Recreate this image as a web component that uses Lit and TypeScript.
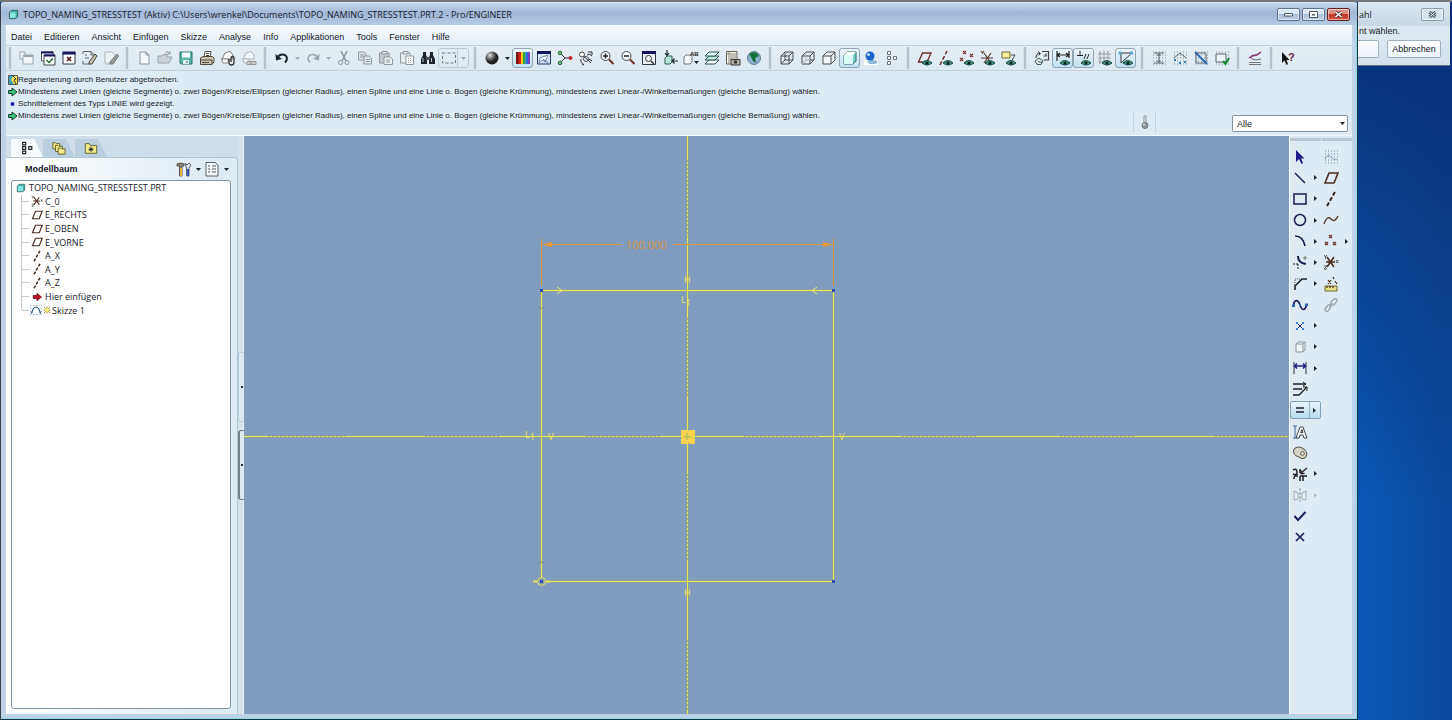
import { LitElement, html, css, svg } from "lit";
import type { SVGTemplateResult, TemplateResult } from "lit";
import { customElement, property } from "lit/decorators.js";
import { classMap } from "lit/directives/class-map.js";

const eye = svg`<path d="M5 13 Q9.500 8 15 13 Q10 17 5 13Z" fill="#3f8f78" stroke="#17493f" stroke-width="1"/><circle cx="10" cy="13" r="1.500" fill="#06231f"/>`;
const dots = svg`<path d="M2 2H15M2 5H15M2 8H15M2 11H15M2 14H15" stroke="#7d8a90" stroke-dasharray="1 2" fill="none"/>`;
const page = (c: string) => svg`<path d="M4 2H10L13 5V14H4Z" fill="#f4f8fb" stroke="${c}"/><path d="M10 2V5H13" fill="none" stroke="${c}"/>`;

const ICONS: Record<string, SVGTemplateResult> = {
  windows: svg`<path d="M1 2H6V5H14V14H4V9H1Z" fill="#f3f7fa" stroke="#9aa5ab"/><path d="M4 9V5H6" fill="none" stroke="#9aa5ab"/><path d="M5 6H14" stroke="#9aa5ab" stroke-width="2"/>`,
  activate: svg`<path d="M1.500 2H13V11H1.500Z" fill="#fff" stroke="#555"/><path d="M1 2.500H13.500" stroke="#15155c" stroke-width="2"/><path d="M4 5H15V15H4Z" fill="#fff" stroke="#444"/><path d="M4 5.500H15" stroke="#15155c" stroke-width="2"/><path d="M6.500 10L9 12.500L13 8.500" fill="none" stroke="#206a30" stroke-width="1.500"/>`,
  closewin: svg`<path d="M2 2.500H14V14H2Z" fill="#fff" stroke="#334"/><path d="M1.500 3H14.500" stroke="#15155c" stroke-width="3"/><path d="M6 7L10 11M10 7L6 11" stroke="#511" stroke-width="1.500"/>`,
  erase: svg`<path d="M1 4V1.500H9L12 4.500V7M1 11V14H8M3 5H5M3 8H7M9 1.500V5H12" fill="none" stroke="#666" /><path d="M7 12L13 4L15 6L10 14H7Z" fill="#c7c0aa" stroke="#444"/>`,
  eraseoff: svg`<path d="M2 13V2H9L12 5V7M2 14H8" fill="#eef3f6" stroke="#aab3b8"/><path d="M7 12L14 4L15.500 6L10 14H7Z" fill="#999" stroke="#777"/>`,
  newfile: page("#8c959a"),
  open: svg`<path d="M1 13V6H5L6 4.500H10V7H15L12 13Z" fill="#cdd3d6" stroke="#9aa3a8"/><path d="M8 3Q11 0 13 4M13 1V4H10" fill="none" stroke="#8f999f"/>`,
  save: svg`<path d="M2 2H14V14H3L2 13Z" fill="#58b8a8" stroke="#2b7068"/><path d="M4 2.500H12V7.500H4Z" fill="#f8ffff"/><path d="M5 10H11V14H5Z" fill="#dcefee"/><path d="M9 11V13" stroke="#2b7068"/>`,
  print: svg`<path d="M5 7L6 1.500H12L11 7" fill="#fff" stroke="#555"/><path d="M1.500 8L4 6.500H13.500L15 8V12L13 14.500H1.500Z" fill="#c9c3b0" stroke="#4e4839"/><path d="M1.500 10H13V14M3 12.500H10M7 3.500H10M7 5.500H10" stroke="#4e4839" fill="none"/>`,
  mailfile: svg`<path d="M2 9L5 3L10 1.500L13 5V9H2Z" fill="#fff" stroke="#777"/><path d="M1.500 9H8V13H3Z" fill="#fff" stroke="#888"/><path d="M9 9V12.500Q9 15 11.500 15T14 12.500V8Q14 6.500 12.500 6.500T11 8V12" fill="none" stroke="#333" stroke-width="1.300"/>`,
  maillink: svg`<path d="M2 9L5 3L10 1.500L13 5V9H2Z" fill="#f5f8fa" stroke="#aab2b6"/><path d="M1.500 9H8V13H3Z" fill="#f5f8fa" stroke="#aab2b6"/><path d="M6 11.500H10V14.500H6ZM10 11.500H15V14.500H10Z" fill="#ccc" stroke="#999"/>`,
  undo: svg`<path d="M3 8Q6 3 11 5Q15 8 11 12.500" fill="none" stroke="#1c2430" stroke-width="2"/><path d="M1.500 4L2 10.500L8 9Z" fill="#1c2430"/>`,
  redo: svg`<path d="M13 8Q10 3 5 5Q1 8 5 12.500" fill="none" stroke="#9aa5ab" stroke-width="1.500"/><path d="M14.500 4L14 10.500L8 9Z" fill="#9aa5ab"/>`,
  cut: svg`<path d="M5 1L10 11M11 1L6 11" stroke="#8b959b" stroke-width="1.500"/><circle cx="4.500" cy="12.500" r="2" fill="none" stroke="#8b959b"/><circle cx="11" cy="12.500" r="2" fill="none" stroke="#8b959b"/>`,
  copy: svg`<path d="M1.500 2H7L9 4V10H1.500Z" fill="#dfe5e9" stroke="#8f999f"/><path d="M7 6H12L14.500 8V14H7Z" fill="#dfe5e9" stroke="#8f999f"/><path d="M3 5H7M3 7H7M9 9.500H13M9 11.500H13" stroke="#8f999f"/>`,
  paste: svg`<path d="M1.500 3H11V13H1.500Z" fill="#c4cacd" stroke="#8f999f"/><path d="M4 1.500H9V4H4Z" fill="#eee" stroke="#8f999f"/><path d="M6 7H12L14.500 9V14.500H6Z" fill="#eef2f4" stroke="#8f999f"/><path d="M8 10H12M8 12H12" stroke="#8f999f"/>`,
  pastespecial: svg`<path d="M1.500 3H11V13H1.500Z" fill="#e6ebee" stroke="#8f999f"/><path d="M4 1.500H9V4H4Z" fill="#eee" stroke="#8f999f"/><path d="M7 6H14.500V14.500H7Z" fill="#fff" stroke="#8f999f"/><path d="M9 8.500H13M9 10.500H13M9 12.500H13" stroke="#8f999f" stroke-dasharray="1 1"/>`,
  find: svg`<path d="M3 2H6V5L7 7V14H1V9L3 5ZM10 2H13V5L15 9V14H9V7L10 5Z" fill="#20262c"/><path d="M6 7H10V10H6Z" fill="#4a525a"/><path d="M3 8V12M11.500 8V12" stroke="#b9c2c8"/>`,
  box: svg`<path d="M1.500 3H14.500V13H1.500Z" fill="none" stroke="#6f7f8a" stroke-dasharray="3 2"/>`,
  spectrum: svg`<path d="M1 2H4V14H1Z" fill="#761912"/><path d="M3.500 2H6V14H3.500Z" fill="#d8241b"/><path d="M6 2H8V14H6Z" fill="#f6c619"/><path d="M8 2H10.500V14H8Z" fill="#2ca83a"/><path d="M10.500 2H13V14H10.500Z" fill="#2a66e0"/><path d="M13 2H15V14H13Z" fill="#7a3fc0"/>`,
  repaint: svg`<path d="M1.500 2H14.500V14H1.500Z" fill="#d5e4f3" stroke="#223a66"/><path d="M1 2.500H15" stroke="#15155c" stroke-width="3"/><path d="M3 13L4 8L12 5L9 12L6 10Z" fill="#fff" stroke="#6d8cb3"/><path d="M7 9L12 13" stroke="#3b5f92"/>`,
  orient: svg`<path d="M3.500 3.500L8 8L3.500 12.500M8 8H13" fill="none" stroke="#333"/><circle cx="3" cy="3" r="1.800" fill="#6dc080" stroke="#256b38"/><circle cx="3" cy="13" r="1.800" fill="#6dc080" stroke="#256b38"/><circle cx="13.500" cy="8" r="2" fill="#c22b31"/>`,
  spin: svg`<circle cx="4" cy="4.500" r="2.500" fill="#fff" stroke="#444"/><circle cx="8" cy="9" r="2.500" fill="#e8eef2" stroke="#555"/><path d="M6 6.500L13 13M10 2H14V5M9 5Q12 3 14 6M3 9Q2 13 6 14.500L4 15M11 9L14 11" fill="none" stroke="#333"/>`,
  zoomin: svg`<circle cx="6.500" cy="6" r="4.500" fill="#f6fafc" stroke="#444"/><path d="M4 6H9M6.500 3.500V8.500" stroke="#222" stroke-width="1.500"/><path d="M10 9.500L14.500 14" stroke="#6a3320" stroke-width="2"/>`,
  zoomout: svg`<circle cx="6.500" cy="6" r="4.500" fill="#f6fafc" stroke="#444"/><path d="M4 6H9" stroke="#222" stroke-width="1.500"/><path d="M10 9.500L14.500 14" stroke="#6a3320" stroke-width="2"/>`,
  refit: svg`<path d="M1.500 2H14.500V14.500H1.500Z" fill="#eaf2f8" stroke="#334"/><path d="M1 2.500H15" stroke="#15155c" stroke-width="3"/><circle cx="7.500" cy="8.500" r="3" fill="#fff" stroke="#333"/><path d="M10 11L13 14" stroke="#333" stroke-width="1.500"/>`,
  reorient: svg`<path d="M3 8L5 6H10V12L8 14H3Z" fill="#b8e7da" stroke="#2d5b50"/><path d="M5 0V5M3 3L5 5.500L7 3M16 11H10M12.500 8.500L10 11L12.500 13.500" fill="none" stroke="#1d2d2a" stroke-width="1.200"/>`,
  views: svg`<path d="M1 7L3 5H9V12L7 14H1Z" fill="#f3f8fa" stroke="#777"/><text x="7" y="6" font-size="6" font-weight="700" font-family="Liberation Sans" fill="#222">AB</text><path d="M11 11H16L13.500 14Z" fill="#222"/>`,
  layers: svg`<path d="M1 14L5 10H15L11 14Z" fill="#fff" stroke="#28564e"/><path d="M1 10L5 6H15L11 10Z" fill="#bfe9dd" stroke="#28564e"/><path d="M1 6L5 2H15L11 6Z" fill="#e8fffa" stroke="#28564e"/>`,
  capture: svg`<path d="M1.500 1.500H12V14H1.500Z" fill="#f7f7f2" stroke="#665f55"/><path d="M1.500 4H12M4 1.500V14M5 6H11M5 8H11M5 10H8" stroke="#8c857a"/><path d="M6 9.500H15V15H6Z" fill="#b6b3aa" stroke="#3a372f"/><circle cx="10.500" cy="12" r="1.800" fill="#333"/>`,
  globe: svg`<circle cx="8" cy="8" r="6.500" fill="#8fb2cc" stroke="#5d7f98"/><path d="M3 4Q7 1 11 3L13 6L9 8L10 13L7 11L5 7Z" fill="#157038"/>`,
  wire: svg`<path d="M2 6H10V14H2ZM6 2H14V10H6ZM2 6L6 2M10 6L14 2M10 14L14 10M2 14L6 10" fill="none" stroke="#4a4a4a"/>`,
  hidden: svg`<path d="M2 6H10V14H2ZM6 2H14V10H10M2 6L6 2M10 6L14 2M10 14L14 10" fill="none" stroke="#4a4a4a"/><path d="M6 2V10H10M2 14L6 10" fill="none" stroke="#b0b6ba"/>`,
  nohidden: svg`<path d="M2 6H10V14H2ZM2 6L6 2H14V10L10 14M10 6L14 2" fill="#f0f5f8" stroke="#4a4a4a"/>`,
  shaded: svg`<path d="M2 5L5 2H14V11L11 14H2Z" fill="#78d3c8" stroke="#2f6b66"/><path d="M2 5H11V14H2Z" fill="#d9fbf6"/><path d="M2 5L5 2H14L11 5Z" fill="#fff"/>`,
  enhanced: svg`<path d="M1 10H15V15H1Z" fill="#fff"/><ellipse cx="9.500" cy="12" rx="5" ry="2" fill="#8fb8d8"/><circle cx="7" cy="6" r="4.500" fill="#1763c7"/><circle cx="5.500" cy="4.500" r="1.500" fill="#b7ddff"/>`,
  tree: svg`<path d="M3.500 1.500H6.500V4.500H3.500ZM3.500 6.500H6.500V9.500H3.500ZM3.500 11.500H6.500V14.500H3.500ZM9.500 6.500H12.500V9.500H9.500Z" fill="#f8fafb" stroke="#6a7379"/>`,
  treetab: svg`<path d="M3 1.500H6.500V4.500H3ZM3 6.500H6.500V9.500H3ZM3 11.500H6.500V14.500H3ZM10 6.500H13.500V9.500H10Z" fill="#fff" stroke="#222" stroke-width="1.300"/>`,
  planeeye: svg`<path d="M1.500 12L5.500 3H14L10 12Z" fill="none" stroke="#6b2d25" stroke-width="1.300"/>${eye}`,
  axiseye: svg`<path d="M2 15L9 1" fill="none" stroke="#6b2d25" stroke-width="1.500" stroke-dasharray="4 2"/>${eye}`,
  pointeye: svg`<path d="M4 1L7 4M7 1L4 4M1 8L4 11M4 8L1 11M11 4L14 7M14 4L11 7" stroke="#7b2d25" stroke-width="1.200"/>${eye}`,
  csyseye: svg`<path d="M1 8H13M4 3L11 13M11 3L4 13M1 1L2.500 3L4 1" fill="none" stroke="#5d3b2e" stroke-width="1.200"/>${eye}`,
  noteeye: svg`<path d="M1 2H9V8H1Z" fill="#f5ef9a" stroke="#6e6a32"/><path d="M10 5H14L10 12" fill="none" stroke="#444"/>${eye}`,
  sketchview: svg`<path d="M8 1.500H14.500V10H9.500M9.500 6H12V3.500" fill="none" stroke="#444" stroke-width="1.200"/><path d="M2 8Q2 3 6 3.500M4 1.500L6.500 3.500L4.500 5.500" fill="none" stroke="#333"/><path d="M1 11L5 8L9 11L7 14.500H3Z" fill="#e3ebe9" stroke="#3f5c55"/><path d="M4 11.500L8 12.500" stroke="#3f5c55"/>`,
  dimeye: svg`<path d="M2 1V11M14 1V8M2 5H14M5 3L2 5L5 7M11 3L14 5L11 7" fill="none" stroke="#252525" stroke-width="1.200"/>${eye}`,
  conseye: svg`<path d="M4 1V5M1 5.500H7M8 9L10 4M11 9L13 4" stroke="#252525"/>${eye}`,
  grideye: svg`<path d="M1 4H14M1 8H14M1 12H8M3 1V14M7 1V14M11 1V9" stroke="#9a9aa0"/>${eye}`,
  verteye: svg`<path d="M2 3H14L3 13V3" fill="none" stroke="#363636"/><path d="M0.500 1.500H3.500V4.500H.5ZM12 1.500H15V4.500H12Z" fill="#5aa8d8"/>${eye}`,
  diag1: svg`${dots}<path d="M3 3H13M3 13H13M8 3V13M6 5H10M6 11H10" stroke="#596267" fill="none"/>`,
  diag2: svg`${dots}<path d="M2 8L8 3L14 8" stroke="#596267" fill="none"/><path d="M2 9H4V11H2ZM12 11H14V13H12ZM7 12H9V14H7Z" fill="#2f7fc6"/>`,
  diag3: svg`${dots}<path d="M3 3H13V13H3Z" stroke="#596267" fill="none"/><path d="M2 2L14 14" stroke="#2868b0" stroke-width="1.800"/>`,
  diag4: svg`${dots}<path d="M2 4H12V12H2Z" stroke="#596267" fill="#eef5f8"/><path d="M9 11L11.500 14L15 8" fill="none" stroke="#198a3a" stroke-width="2"/>`,
  curve: svg`<path d="M2 14.500H14M2 12.500H14" fill="none" stroke="#777"/><path d="M14 2L9 5Q3 5 3 7T9 10L14 9" fill="none" stroke="#666"/><path d="M2 8Q6 5 10 5L14 2" fill="none" stroke="#8c3b78" stroke-width="1.500"/>`,
  help: svg`<path d="M2 2V13L4.500 10.500L6.500 15L8 14L6.500 10H9.500Z" fill="#111"/><text x="8" y="11" font-size="11" font-weight="700" font-family="Liberation Sans" fill="#641a4a">?</text>`,
  arrow: svg`<path d="M4 1V13L7 10L9.500 15L11 14L9 9.500H12.500Z" fill="#1b1b86"/>`,
  line: svg`<path d="M3 3L13 13" stroke="#1b1b4e" stroke-width="1.500"/>`,
  rect: svg`<path d="M2 3H14V13H2Z" fill="none" stroke="#1b1b4e" stroke-width="1.500"/>`,
  circle: svg`<circle cx="8" cy="8" r="5.500" fill="none" stroke="#1b1b4e" stroke-width="1.500"/>`,
  arc: svg`<path d="M3 3Q11 3 13 13" fill="none" stroke="#1b1b4e" stroke-width="1.700"/>`,
  fillet: svg`<path d="M6 2Q6 9 14 10" fill="none" stroke="#1b1b4e" stroke-width="2"/><path d="M1 10H7M6 10V15" stroke="#222" stroke-dasharray="2 1"/><path d="M11 4H15M13 2V6" stroke="#777"/>`,
  chamfer: svg`<path d="M3 14V10L10 3H15" fill="none" stroke="#222" stroke-width="1.600"/><path d="M3 9V3H9" fill="none" stroke="#555" stroke-dasharray="1 1"/>`,
  spline: svg`<path d="M1.500 9C2 2 6 2 8 8S13 14 14.500 8" fill="none" stroke="#1b1b5e" stroke-width="1.700"/><path d="M0 7.500H3V10H0ZM7 7H9V9H7ZM13 6.500H16V9H13Z" fill="#2d68a8"/>`,
  point: svg`<path d="M5.500 5.500L10.500 10.500M10.500 5.500L5.500 10.500" stroke="#26267a"/><path d="M4 4H6V6H4ZM10 4H12V6H10ZM4 10H6V12H4ZM10 10H12V12H10Z" fill="#3d82c6"/>`,
  useedge: svg`<path d="M4 5H11V13H4ZM4 5L6 3H13V11L11 13M11 5L13 3" fill="#f1f6f9" stroke="#8d979d"/>`,
  dim: svg`<path d="M2 2V14M14 2V14" stroke="#333"/><path d="M2 6H14M5 3.500L2.500 6L5 8.500M11 3.500L13.500 6L11 8.500" fill="none" stroke="#1b1b86" stroke-width="1.500"/>`,
  modify: svg`<path d="M1 3H14M1 8H10M1 14H7L13 8L15 6" fill="none" stroke="#222" stroke-width="1.400"/><path d="M11 1L14 3L11 5M11 6H15V10" fill="none" stroke="#222"/>`,
  equal: svg`<path d="M4 6H12M4 10H12" stroke="#1b1b2e" stroke-width="1.700"/>`,
  text: svg`<path d="M1 2H5M3 2V14M1 14H5" fill="none" stroke="#3e6b96"/><path d="M4 14L8 3H11L15 14H12L11 11H8L7 14ZM8.500 8.500H11L10 5.500Z" fill="#f7fafb" stroke="#454545"/>`,
  palette: svg`<path d="M2 4Q6 0 12 4Q17 9 13 13Q10 15 7 12Q0 10 2 4Z" fill="#d8d3c8" stroke="#514c45"/><circle cx="10.500" cy="8.500" r="1.800" fill="#fff" stroke="#514c45"/>`,
  trim: svg`<path d="M1 4Q5 2 5 6T1 8M5 8V10Q2 9 2 13M8 3V7M8 10V15M8 10H15M11 10V15" fill="none" stroke="#222" stroke-width="1.500"/><path d="M15 2L9 7M9 4V7.500H12.500" fill="none" stroke="#2b1d1d" stroke-width="1.300"/>`,
  mirror: svg`<path d="M2 4L6 6V12L2 13ZM14 4L10 6V12L14 13Z" fill="#e8eef1" stroke="#a0a9ae"/><path d="M8 1V15" stroke="#8c959a" stroke-dasharray="3 1"/>`,
  check: svg`<path d="M2.500 8L6 12L13.500 4" fill="none" stroke="#1b1b5e" stroke-width="2"/>`,
  cross: svg`<path d="M4 4L12 12M12 4L4 12" stroke="#1b1b5e" stroke-width="1.700"/>`,
  sketch: svg`${dots}<path d="M2 10Q5 4 8 8T14 10" fill="none" stroke="#8ba3b4"/>`,
  plane: svg`<path d="M2 13L6 3H15L11 13Z" fill="none" stroke="#4c2f22" stroke-width="1.600"/>`,
  axis: svg`<path d="M4 15L12 1" stroke="#3a2418" stroke-width="2" stroke-dasharray="4 2"/>`,
  wave: svg`<path d="M1 12Q4 3 8 7T15 4" fill="none" stroke="#5b3b2c" stroke-width="1.400"/>`,
  points: svg`<path d="M6 2L9 5M9 2L6 5M2 9L5 12M5 9L2 12M10 9L13 12M13 9L10 12" stroke="#6b3a28" stroke-width="1.500"/>`,
  csys: svg`<path d="M3 8H12M4 3L11 13M11 3L4 13" stroke="#4e3020" stroke-width="1.600"/><path d="M1 1L2.500 3L4 1M2.500 3V5M1 12H4L1 15H4M13 6L15.500 9M15.500 6L13 9" fill="none" stroke="#555"/>`,
  ruler: svg`<path d="M2 10H14V15H2Z" fill="#e6e08a" stroke="#6e6a32"/><path d="M4 10V12M7 10V12M10 10V12M5 4L8 8M8 4L5 8M10 1L11 3M12 5L14 8" stroke="#4a2b1d" stroke-width="1.200"/>`,
  chain: svg`<path d="M2 12L5 8Q8 7 8 10L5 14Q2 15 2 12ZM8 5L11 2Q15 1 14 4L11 8Q7 9 8 5Z" fill="none" stroke="#9aa1a5" stroke-width="1.300"/><path d="M6 10L10 6" stroke="#9aa1a5"/>`,
  cube: svg`<path d="M2 5L5 2H14V11L11 14H2Z" fill="#3fb5aa" stroke="#25413f"/><path d="M3 5H11V13H3Z" fill="#86e8df"/>`,
  insert: svg`<path d="M3 6H8V3L14 8L8 13V10H3Z" fill="#c01220" stroke="#5e0810"/>`,
  skizze: svg`<path d="M1 1V15M15 1V15M4 14H13M4 2H13" stroke="#7f98ad" stroke-dasharray="2 2"/><path d="M2 13Q4 4 8 4T14 13" fill="none" stroke="#27507a" stroke-width="1.600"/>`,
  star: svg`<path d="M8 1V15M1 8H15M2 2L14 14M14 2L2 14" stroke="#8c8120" stroke-width="1.800"/><circle cx="8" cy="8" r="4" fill="#fff27a"/>`,
  stack: svg`<path d="M1 2H4L5 3H9V9H1Z" fill="#f3e98a" stroke="#5e5a26"/><path d="M4 5H7L8 6H12V12H4Z" fill="#f3e98a" stroke="#5e5a26"/><path d="M7 8H10L11 9H15V15H7Z" fill="#f3e98a" stroke="#5e5a26"/>`,
  fav: svg`<path d="M1.500 3H6L7 5H14.500V14H1.500Z" fill="#f5ec8e" stroke="#5e5a26"/><path d="M8 6.500V12.500M5 9.500H11M6 7.500L10 11.500M10 7.500L6 11.500" stroke="#222"/>`,
  tools: svg`<path d="M1 3Q4 1 8 3V5H6V15H3.500V5H1Z" fill="#8c8478" stroke="#555"/><path d="M4 7H6V15H4Z" fill="#e3b53b"/><path d="M9 2L11 4L13 2L15 4L13 7V15H10.500V7Z" fill="#dfe6ea" stroke="#666"/><path d="M11 8H13V15H11Z" fill="#2e55b8"/>`,
  list: svg`<path d="M2 1.500H11L14 4V15H2Z" fill="#f6fafc" stroke="#5a6268"/><path d="M4 5H6M8 5H12M4 8H6M8 8H12M4 11H6M8 11H12" stroke="#555"/>`,
  thermo: svg`<path d="M7 2H9V9H7Z" fill="#f4f6f7" stroke="#8a8f92"/><circle cx="8" cy="11.500" r="3" fill="#8f9699" stroke="#73797c"/><circle cx="7" cy="10.500" r="1" fill="#e9edef"/>`,
};

@customElement("pro-icon")
export class ProIcon extends LitElement {
  @property() name = "";
  @property({ type: Number }) size = 16;
  static styles = css`
    :host { display: inline-flex; flex: none; }
    svg { display: block; }
  `;
  render() {
    if (this.name === "sphere")
      return html`<svg width=${this.size} height=${this.size} viewBox="0 0 16 16" aria-hidden="true">
        <defs><radialGradient id="ball" cx="35%" cy="30%"><stop offset="0" stop-color="#e6e6e6"/><stop offset=".5" stop-color="#777"/><stop offset="1" stop-color="#222"/></radialGradient></defs>
        <circle cx="8" cy="8" r="6.500" fill="url(#ball)"/></svg>`;
    return html`<svg width=${this.size} height=${this.size} viewBox="0 0 16 16" aria-hidden="true">${ICONS[this.name]}</svg>`;
  }
}

/* Toolbar groups: "name" | "name:on" | "name:box" | ">" and "-" for active / inactive flyout arrows. */
const TOOLBAR: string[][] = [
  ["windows", "activate", "closewin", "erase", "eraseoff"],
  ["newfile", "open", "save", "print", "mailfile", "maillink"],
  ["undo", "-", "redo", "-", "cut", "copy", "paste", "pastespecial", "find", "box:box"],
  ["sphere", ">", "spectrum:on", "repaint", "orient", "spin", "zoomin", "zoomout", "refit", "reorient", "views", "layers", "capture", "globe"],
  ["wire", "hidden", "nohidden", "shaded:on", "enhanced", "tree"],
  ["planeeye", "axiseye", "pointeye", "csyseye", "noteeye"],
  ["sketchview", "dimeye:on", "conseye:on", "grideye", "verteye:on"],
  ["diag1", "diag2", "diag3", "diag4"],
  ["curve"],
  ["help"],
];

/* Sketcher palette rows: left tool, flyout state, right tool, flyout state. */
const PALETTE: [string, string, string, string][] = [
  ["arrow", "", "sketch", ""],
  ["line", ">", "plane", ""],
  ["rect", ">", "axis", ""],
  ["circle", ">", "wave", ""],
  ["arc", ">", "points", ">"],
  ["fillet", ">", "csys", ""],
  ["chamfer", ">", "ruler", ""],
  ["spline", "", "chain", ""],
  ["point", ">", "", ""],
  ["useedge", ">", "", ""],
  ["dim", ">", "", ""],
  ["modify", "", "", ""],
  ["equal", ">", "", ""],
  ["text", "", "", ""],
  ["palette", "", "", ""],
  ["trim", ">", "", ""],
  ["mirror", "-", "", ""],
  ["check", "", "", ""],
  ["cross", "", "", ""],
];

const MENUS = ["Datei", "Editieren", "Ansicht", "Einfügen", "Skizze", "Analyse", "Info", "Applikationen", "Tools", "Fenster", "Hilfe"];
const HINT = "Mindestens zwei Linien (gleiche Segmente) o. zwei Bögen/Kreise/Ellipsen (gleicher Radius), einen Spline und eine Linie o. Bogen (gleiche Krümmung), mindestens zwei Linear-/Winkelbemaßungen (gleiche Bemaßung) wählen.";
const MESSAGES: [string, string][] = [
  ["stop", "Regenerierung durch Benutzer abgebrochen."],
  ["go", HINT],
  ["dot", "Schnittelement des Typs LINIE wird gezeigt."],
  ["go", HINT],
];
const NODES: [string, string][] = [
  ["csys", "C_0"], ["plane", "E_RECHTS"], ["plane", "E_OBEN"], ["plane", "E_VORNE"],
  ["axis", "A_X"], ["axis", "A_Y"], ["axis", "A_Z"], ["insert", "Hier einfügen"], ["skizze", "Skizze 1"],
];

const bullets: Record<string, TemplateResult> = {
  stop: html`<svg width="10" height="10" viewBox="0 0 10 10"><path d="M.5.5H9.500V9.500H.5Z" fill="#ffe14a" stroke="#555"/><path d="M1 1H5L3 5L6 9H1Z" fill="#34a5b8"/><path d="M5 1L8 4L6 5L8 9" fill="none" stroke="#333"/></svg>`,
  go: html`<svg width="10" height="10" viewBox="0 0 10 10"><path d="M.5 3.500H4V1L9 5L4 9V6.500H.5Z" fill="#35c77c" stroke="#16382a"/></svg>`,
  dot: html`<svg width="10" height="10" viewBox="0 0 10 10"><circle cx="4.500" cy="5" r="2" fill="#1c1ca6"/></svg>`,
};

@customElement("sketch-canvas")
export class SketchCanvas extends LitElement {
  static styles = css`
    :host { display: block; overflow: hidden; background: #809cbe; }
    svg { display: block; width: 100%; height: 100%; }
    .edge { stroke: #ebe75a; fill: none; }
    .halo { stroke: #8ca39a; stroke-width: 3; fill: none; }
    .phantom { stroke: #a5b07c; stroke-dasharray: 2 2; fill: none; }
    .dim { stroke: #dc983a; fill: none; }
    .arrow { fill: #e79a30; }
    .mark { stroke: #ece67e; fill: none; }
    .label { font: 9px "Open Sans", sans-serif; fill: #f0e565; }
    .value { font: 11px "Open Sans", sans-serif; fill: #dc983a; }
    .sub { font-size: 9px; }
  `;
  render() {
    return html`<svg role="img" aria-label="Skizze">
      <g transform="translate(-244 -136)" shape-rendering="crispEdges">
        <path class="halo" d="M687.500 100V2000M200 436.500H3000M541.500 290.500H833.500V581.500H541.500Z"/>
        <path class="edge" d="M687.500 100V2000M200 436.500H3000M541.500 290.500H833.500V581.500H541.500Z"/>
        <path class="phantom" d="M687.500 160V237M687.500 318V396M687.500 474V560M687.500 640V710M268 436.500H345M425 436.500H500M586 436.500H662M744 436.500H820M902 436.500H978M1060 436.500H1136M1215 436.500H1289"/>
        <path class="dim" d="M541.500 239V286M833.500 239V286M542 244.500H621M673 244.500H833"/>
        <path d="M681 430H686V431H689V430H694V435H693V438H694V443H689V442H686V443H681V438H682V435H681Z" fill="#fbd24f" stroke="#fbd24f"/>
        <path d="M684 436H691V438H684ZM686 433H688V440H686Z" fill="#c3c55a"/>
      </g>
      <g transform="translate(-244 -136)">
        <path class="arrow" d="M542 244.500L552 242V247ZM833 244.500L823 242V247Z"/>
        <path class="mark" d="M557 287L562 290.500L557 294M817 287L812 290.500L817 294"/>
        <path d="M538 307Q541.500 310 545 307M538 564Q541.500 560 545 564" fill="none" stroke="#708a78"/>
        <path d="M540 289H543V292H540ZM832 289H835V292H832ZM832 580H835V583H832Z" fill="#2b4cb4"/>
        <path d="M533 581.500H550" stroke="#e8dc6a" stroke-width="2"/>
        <circle cx="541.500" cy="581.500" r="4" fill="#8fa2a8" stroke="#e8dc6a"/>
        <path d="M540 580H543V583H540Z" fill="#2b4cb4"/>
        <text class="value" x="626" y="249">100.000</text>
        <text class="label" x="684" y="283">H</text>
        <text class="label" x="681" y="303">L<tspan class="sub" dy="3">1</tspan></text>
        <text class="label" x="684" y="596">H</text>
        <text class="label" x="525" y="438">L<tspan class="sub" dy="2">1</tspan></text>
        <text class="label" x="548" y="440">V</text>
        <text class="label" x="839" y="440">V</text>
      </g>
    </svg>`;
  }
}

@customElement("app-root")
export class AppRoot extends LitElement {
  static styles = css`
    :host { display: flex; height: 100vh; box-sizing: border-box; border-top: 2px solid #73777a; background: #0b4a9e; overflow: hidden; font: 9px "Liberation Sans", sans-serif; color: #17202a; }
    * { box-sizing: border-box; }
    button { margin: 0; padding: 0; border: 0; background: none; font: inherit; color: inherit; }
    .window { flex: 1; min-width: 0; display: flex; flex-direction: column; border-style: solid; border-width: 1px; border-color: #d6e4f4 #20333f #1d3440 #39424c; border-radius: 4px 4px 0 0; background: #bed2e8; padding: 0 5px 5px; box-shadow: inset -1px -1px #85dcec; }
    .title { display: flex; align-items: center; gap: 4px; height: 22px; margin: 0 -5px; padding: 1px 7px 0; background: linear-gradient(#c6d8ec, #9fb8d8 45%, #b4cbe4); font: 9px "Open Sans", sans-serif; }
    .title h1 { margin: 0; flex: 1; font: inherit; white-space: nowrap; }
    .winbtns { display: flex; gap: 2px; }
    .winbtn { width: 23px; height: 13px; border: 1px solid #5c7291; border-radius: 2px; background: linear-gradient(#dbe7f4 45%, #a9bfd9 50%, #bfd2e6); display: grid; place-items: center; box-shadow: inset 0 0 0 1px #ffffff80; }
    .winbtn.close { border-color: #6b2020; background: linear-gradient(#dc9184 45%, #bd3723 50%, #d25a45); }
    .winbtn.faded { border-color: #8c9db0; background: #d6e2ed; }
    .menu { display: flex; align-items: center; gap: 12px; height: 20px; padding: 3px 0 0 5px; background: linear-gradient(#f7fafd, #e4eef5); }
    .toolbar { display: flex; align-items: center; height: 26px; padding-left: 2px; background: linear-gradient(#e6eef4, #dce9f2); border: solid #c3d0da; border-width: 1px 0; }
    .grip { width: 4px; height: 22px; margin-right: 4px; background: #b5c1cb; border: solid #d7e1e8; border-width: 0 1px; flex: none; }
    .group { display: flex; align-items: center; height: 24px; margin-right: 4px; }
    .tool { width: 21px; height: 20px; display: grid; place-items: center; border: 1px solid transparent; border-radius: 3px; }
    .tool.on { border-color: #8fa6b4; background: linear-gradient(#eef6fb, #bfe0f2); }
    .fly { width: 10px; height: 20px; display: grid; place-items: center; }
    .combo { display: flex; width: 31px; height: 20px; border: 1px solid #bcc9d3; border-radius: 3px; align-items: center; }
    .combo .tool { border-radius: 0; border-right: 1px solid #bcc9d3; width: 20px; }
    .status { display: flex; justify-content: space-between; align-items: flex-end; height: 65px; background: #deebf4; border-bottom: 1px solid #f4fafd; padding: 0 4px 3px 2px; }
    .messages { list-style: none; margin: 0; padding: 3px 0 0; align-self: flex-start; font-size: 8px; line-height: 12px; white-space: nowrap; }
    .messages li { display: flex; align-items: center; }
    .filter { display: flex; align-items: flex-end; gap: 76px; }
    .thermo { width: 23px; height: 20px; display: grid; place-items: center; border: solid #c6d3dc; border-width: 0 1px; }
    .select { display: grid; align-items: center; width: 116px; }
    .select select, .select svg { grid-area: 1 / 1; }
    .select svg { justify-self: end; margin-right: 3px; pointer-events: none; }
    .select select { appearance: none; height: 17px; border: 1px solid #8093a0; border-radius: 2px; background: #fff; padding: 0 4px; font: inherit; color: inherit; }
    .main { flex: 1; min-height: 0; display: flex; background: #deebf4; }
    .side { width: 232px; display: flex; flex-direction: column; background: #d3e2ed; }
    .tabs { display: flex; height: 21px; padding: 3px 0 0 5px; background: #d0deea; }
    .tab { width: 32px; height: 18px; display: grid; place-items: center; background: #b9cfe0; clip-path: polygon(0 0, 72% 0, 100% 100%, 0 100%); }
    .tab.active { background: #f6fafc; }
    .panel { flex: 1; min-height: 0; display: flex; flex-direction: column; border: solid #b3c4d1; border-width: 1px 1px 0 0; border-radius: 0 4px 0 0; background: linear-gradient(90deg, #ffffff, #dfebf3 90%); padding: 0 6px 5px 5px; }
    .head { display: flex; align-items: center; height: 22px; padding-left: 14px; }
    .head h2 { flex: 1; margin: 0; font: 700 9px "Liberation Sans", sans-serif; }
    .head .tool { width: 18px; }
    .tree { flex: 1; border: 1px solid #8295a2; border-radius: 3px; background: #fff; padding: 0 4px; font: 9px "Open Sans", sans-serif; }
    .nodes { list-style: none; margin: 0; padding: 0; display: grid; grid-template-rows: repeat(10, 1fr); height: 136px; }
    .nodes li { display: flex; align-items: center; gap: 2px; white-space: nowrap; }
    .nodes .root { gap: 3px; }
    .nodes .child { margin-left: 5px; border-left: 1px solid #c4c9cd; }
    .nodes .child:last-child { border-color: transparent; background: linear-gradient(#c4c9cd, #c4c9cd) left top / 1px 50% no-repeat border-box; }
    .nodes .child::before { content: ""; width: 7px; height: 1px; background: #c4c9cd; }
    .nodes .fresh { gap: 1px; }
    .splitter { width: 6px; display: flex; flex-direction: column; gap: 8px; padding-top: 216px; border-right: 1px solid #eef6fa; background: #d5e3ed; }
    .handle { width: 6px; height: 70px; border: 1px solid #b4d2de; border-right: 0; border-radius: 3px 0 0 3px; background: #dce9f1; display: grid; place-items: center; }
    .handle::after { content: ""; width: 2px; height: 2px; background: #26303a; }
    .handle.dark { border-color: #76838d; border-width: 1px 0 1px 2px; }
    sketch-canvas { flex: 1; min-width: 0; }
    .palette { width: 63px; border-left: 1px solid #f4fafd; background: #deebf4; }
    .bars { display: flex; gap: 1px; padding-top: 2px; }
    .bars span { flex: 1; height: 3px; background: #bcc8d1; }
    .rows { display: grid; grid-template-rows: repeat(19, 1fr); height: 402px; margin-top: 5px; }
    .row { display: grid; grid-template-columns: 20px 11px 20px 11px; align-items: center; }
    .row.on { grid-template-columns: 31px 20px 11px; }
    .slot { height: 20px; display: grid; place-items: center; }
    .pair { display: flex; align-items: center; height: 18px; border: 1px solid #7ea0b8; border-radius: 2px; background: linear-gradient(#e9f5fb, #b7dcf0); }
    .pair .slot:first-child { width: 19px; border-right: 1px solid #8fb3c8; }
    .pair .slot:last-child { width: 9px; }
    .pair .slot { height: 16px; }
    .desktop { width: 94px; background: linear-gradient(90deg, #0a57b5, #0b4a9e 90%); }
    .shade { height: 100%; background: linear-gradient(#082f75, #0b3f8f00 70%); }
    .dialog { height: 64px; margin-right: 2px; border-bottom: 1px solid #5f7388; background: linear-gradient(#e3edf5, #d5e1ec); display: flex; flex-direction: column; }
    .dtitle { display: flex; justify-content: space-between; align-items: center; height: 24px; padding: 0 6px 0 1px; background: linear-gradient(#dbe6f0, #c9d8e6); font: 9px "Open Sans", sans-serif; }
    .dtext { margin: 0; padding: 0 0 0 1px; line-height: 11px; }
    .dbtns { display: flex; gap: 8px; margin-top: 3px; }
    .dbtn { height: 18px; width: 54px; border: 1px solid #9fb0be; border-radius: 2px; background: linear-gradient(#fff, #eaf2f8); }
    .dbtn.cut { width: 21px; border-left: 0; border-radius: 0 2px 2px 0; }
  `;

  private flyArrow(on: boolean) {
    return html`<svg width="5" height="3" viewBox="0 0 5 3"><path d="M0 0H5L2.500 3Z" fill=${on ? "#1a222a" : "#a3adb4"}/></svg>`;
  }

  private sideArrow(state: string) {
    return state ? html`<svg width="3" height="5" viewBox="0 0 3 5"><path d="M0 0V5L3 2.500Z" fill=${state === ">" ? "#1a222a" : "#b4bec5"}/></svg>` : "";
  }

  private tool(spec: string) {
    const [name, state] = spec.split(":");
    if (name === ">" || name === "-") return html`<button class="fly" aria-label="Mehr">${this.flyArrow(name === ">")}</button>`;
    const button = html`<button class=${classMap({ tool: true, on: state === "on" })} aria-label=${name}><pro-icon name=${name}></pro-icon></button>`;
    return state === "box" ? html`<span class="combo">${button}<button class="fly" aria-label="Mehr">${this.flyArrow(false)}</button></span>` : button;
  }

  private slotted(name: string) {
    return name ? html`<button class="slot" aria-label=${name}><pro-icon name=${name}></pro-icon></button>` : html`<span></span>`;
  }

  private paletteRow([left, lf, right, rf]: [string, string, string, string]) {
    if (left === "equal")
      return html`<div class="row on"><div class="pair"><button class="slot" aria-label="equal"><pro-icon name="equal"></pro-icon></button><button class="slot" aria-label="Mehr">${this.sideArrow(lf)}</button></div></div>`;
    return html`<div class="row">${this.slotted(left)}<span class="slot">${this.sideArrow(lf)}</span>${this.slotted(right)}<span class="slot">${this.sideArrow(rf)}</span></div>`;
  }

  render() {
    return html`
      <main class="window">
        <header class="title">
          <pro-icon name="cube" size="11"></pro-icon>
          <h1>TOPO_NAMING_STRESSTEST (Aktiv) C:\\Users\\wrenkel\\Documents\\TOPO_NAMING_STRESSTEST.PRT.2 - Pro/ENGINEER</h1>
          <div class="winbtns">
            <button class="winbtn" aria-label="Minimieren"><svg width="9" height="5" viewBox="0 0 9 5"><path d="M.5 1.500H8.500V4H.5Z" fill="#fff" stroke="#46566b"/></svg></button>
            <button class="winbtn" aria-label="Maximieren"><svg width="9" height="7" viewBox="0 0 9 7"><path d="M.5.5H8.500V6.500H.5Z" fill="#fff" stroke="#46566b"/><path d="M3 3H6V4.500H3Z" fill="#46566b"/></svg></button>
            <button class="winbtn close" aria-label="Schließen"><svg width="9" height="7" viewBox="0 0 9 7"><path d="M1.500 1L7.500 6M7.500 1L1.500 6" stroke="#5a2a2a" stroke-width="3"/><path d="M1.500 1L7.500 6M7.500 1L1.500 6" stroke="#fff" stroke-width="1.500"/></svg></button>
          </div>
        </header>
        <nav class="menu">${MENUS.map((m) => html`<button>${m}</button>`)}</nav>
        <div class="toolbar">${TOOLBAR.map((g) => html`<span class="grip"></span><div class="group">${g.map((t) => this.tool(t))}</div>`)}</div>
        <section class="status">
          <ul class="messages">${MESSAGES.map(([k, t]) => html`<li>${bullets[k]}<span>${t}</span></li>`)}</ul>
          <div class="filter">
            <span class="thermo"><pro-icon name="thermo"></pro-icon></span>
            <label class="select"><select aria-label="Filter"><option>Alle</option></select>${this.flyArrow(true)}</label>
          </div>
        </section>
        <div class="main">
          <aside class="side">
            <div class="tabs">
              <button class="tab active" aria-label="Modellbaum"><pro-icon name="treetab" size="14"></pro-icon></button>
              <button class="tab" aria-label="Ordner"><pro-icon name="stack" size="14"></pro-icon></button>
              <button class="tab" aria-label="Favoriten"><pro-icon name="fav" size="14"></pro-icon></button>
            </div>
            <div class="panel">
              <div class="head">
                <h2>Modellbaum</h2>
                <button class="tool" aria-label="Einstellungen"><pro-icon name="tools"></pro-icon></button>
                <button class="fly" aria-label="Mehr">${this.flyArrow(true)}</button>
                <button class="tool" aria-label="Anzeigen"><pro-icon name="list"></pro-icon></button>
                <button class="fly" aria-label="Mehr">${this.flyArrow(true)}</button>
              </div>
              <div class="tree">
                <ul class="nodes">
                  <li class="root"><pro-icon name="cube" size="10"></pro-icon>TOPO_NAMING_STRESSTEST.PRT</li>
                  ${NODES.map(([icon, text]) => html`<li class=${classMap({ child: true, fresh: icon === "skizze" })}><pro-icon name=${icon} size="12"></pro-icon>${icon === "skizze" ? html`<pro-icon name="star" size="8"></pro-icon>` : ""}${text}</li>`)}
                </ul>
              </div>
            </div>
          </aside>
          <div class="splitter">
            <button class="handle" aria-label="Navigator"></button>
            <button class="handle dark" aria-label="Browser"></button>
          </div>
          <sketch-canvas></sketch-canvas>
          <aside class="palette">
            <div class="bars"><span></span><span></span></div>
            <div class="rows">${PALETTE.map((r) => this.paletteRow(r))}</div>
          </aside>
        </div>
      </main>
      <aside class="desktop">
        <div class="shade">
          <section class="dialog">
            <div class="dtitle"><span>ahl</span><button class="winbtn faded" aria-label="Schließen"><svg width="9" height="7" viewBox="0 0 9 7"><path d="M1.500 1L7.500 6M7.500 1L1.500 6" stroke="#46566b" stroke-width="3"/><path d="M1.500 1L7.500 6M7.500 1L1.500 6" stroke="#fff"/></svg></button></div>
            <p class="dtext">nt wählen.</p>
            <div class="dbtns"><button class="dbtn cut" aria-label="OK"></button><button class="dbtn">Abbrechen</button></div>
          </section>
        </div>
      </aside>
    `;
  }
}
